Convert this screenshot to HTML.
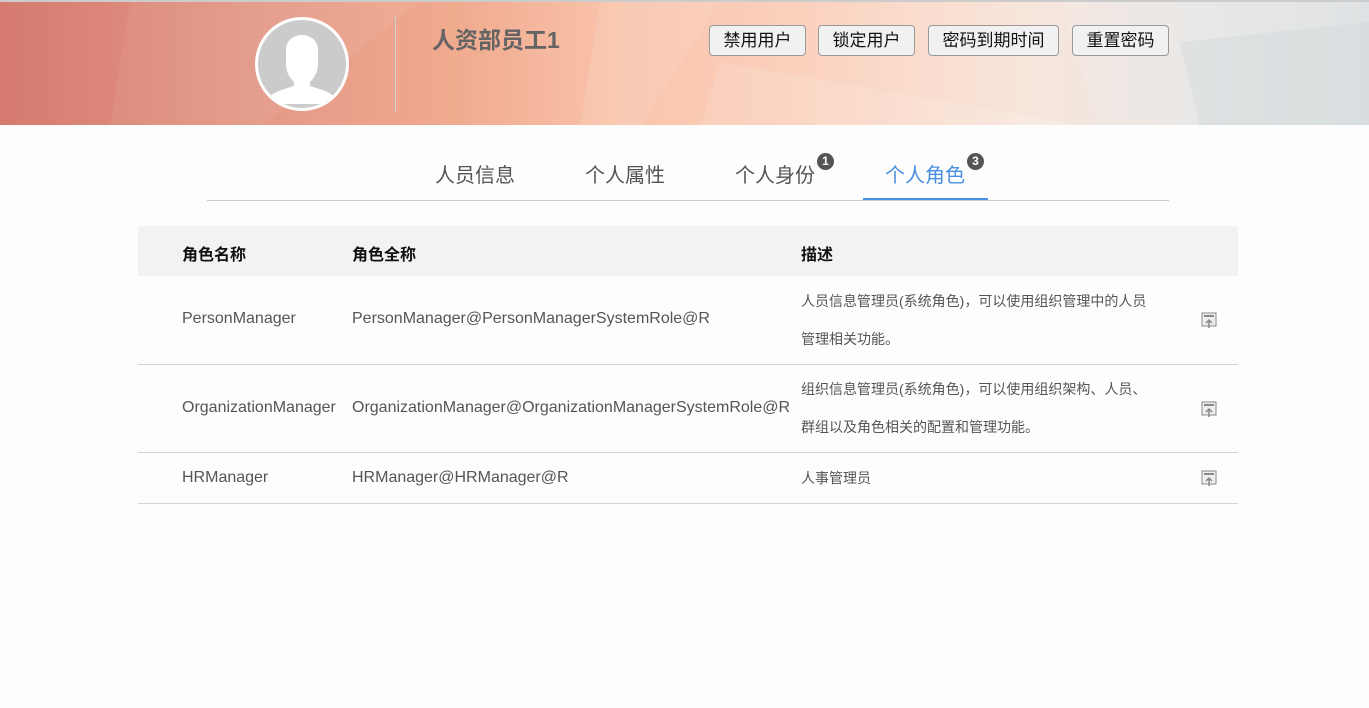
<!DOCTYPE html>
<html><head><meta charset="utf-8"><style>
*{margin:0;padding:0;box-sizing:border-box}
body{width:1369px;height:708px;background:#fdfdfd;font-family:"Liberation Sans","Noto Sans CJK SC",sans-serif;position:relative;overflow:hidden}
.hd{position:absolute;left:0;top:0;width:1369px;height:125px;border-top:2px solid #ccc;
background:linear-gradient(90deg,#d67a70 0%,#e59a88 20%,#f0aa8e 33%,#f9c3aa 45%,#fbd3c0 60%,#f8e6dc 75%,#e6e6e6 88%,#dcdfe1 100%);overflow:hidden}
.poly{position:absolute;inset:0}
.av{position:absolute;left:255px;top:15px;width:94px;height:94px;border-radius:50%;background:#cbcbcb;border:3px solid #fff;overflow:hidden}
.dv{position:absolute;left:395px;top:15px;width:1px;height:95px;background:#c9d3d3}
.nm{position:absolute;left:432px;top:19px;font-size:23px;font-weight:bold;color:#646464}
.b{position:absolute;top:23px;height:31px;border:1px solid #999;border-radius:4px;background:#f1f1f1;font-size:17px;line-height:29px;text-align:center;color:#111}
.tab{position:absolute;top:159px;font-size:20px;color:#555}
.bd{position:absolute;top:153px;width:17px;height:17px;border-radius:50%;background:#555;color:#fff;font-size:12px;line-height:17px;text-align:center;font-weight:bold}
.tbl{position:absolute;left:138px;width:1100px}
.th{top:226px;height:50px;background:#f2f2f2}
.c{position:absolute;font-size:16px;color:#555}
.h{position:absolute;top:241px;font-size:16px;font-weight:bold;color:#111}
.ln{position:absolute;left:138px;width:1100px;height:1px;background:#d4d4d4}
.d{position:absolute;left:801px;font-size:14px;color:#555;line-height:38px;width:372px}
.ic{position:absolute;left:1201px}
</style></head><body>
<div class="hd">
<svg class="poly" width="1369" height="125"><polygon points="130,0 420,0 260,125 110,125" fill="#fff" opacity=".06"/><polygon points="600,0 720,0 640,125 580,125" fill="#fff" opacity=".1"/><polygon points="720,60 1090,125 700,125" fill="#fff" opacity=".12"/><polygon points="1060,0 1369,0 1369,125 1100,125" fill="#fff" opacity=".1"/><polygon points="1180,40 1369,20 1369,125 1200,125" fill="#cfd6da" opacity=".4"/></svg>
<div class="av"><svg width="88" height="88" viewBox="0 0 88 88"><path d="M28 30 C28 10 60 10 60 30 L60 44 C60 54 54 60 52 62 L52 66 C64 70 76 72 82 84 L6 84 C12 72 24 70 36 66 L36 62 C34 60 28 54 28 44 Z" fill="#fff"/></svg></div>
<div class="dv"></div>
<div class="nm">人资部员工1</div>
<div class="b" style="left:709px;width:97px">禁用用户</div>
<div class="b" style="left:818px;width:97px">锁定用户</div>
<div class="b" style="left:928px;width:131px">密码到期时间</div>
<div class="b" style="left:1072px;width:97px">重置密码</div>
</div>
<div class="tab" style="left:435px">人员信息</div>
<div class="tab" style="left:585px">个人属性</div>
<div class="tab" style="left:735px">个人身份</div><div class="bd" style="left:817px">1</div>
<div class="tab" style="left:885px;color:#4a90e2">个人角色</div><div class="bd" style="left:967px">3</div>
<div style="position:absolute;left:207px;top:200px;width:962px;height:1px;background:#ccc"></div>
<div style="position:absolute;left:863px;top:198px;width:125px;height:2px;background:#4a90e2"></div>
<div class="tbl th"></div>
<div class="h" style="left:182px">角色名称</div><div class="h" style="left:352px">角色全称</div><div class="h" style="left:801px">描述</div>
<div class="c" style="left:182px;top:310px">PersonManager</div>
<div class="c" style="left:352px;top:310px">PersonManager@PersonManagerSystemRole@R</div>
<div class="d" style="top:282px">人员信息管理员(系统角色)，可以使用组织管理中的人员<br>管理相关功能。</div>
<div class="ln" style="top:364px"></div>
<div class="c" style="left:182px;top:399px">OrganizationManager</div>
<div class="c" style="left:352px;top:399px">OrganizationManager@OrganizationManagerSystemRole@R</div>
<div class="d" style="top:370px">组织信息管理员(系统角色)，可以使用组织架构、人员、<br>群组以及角色相关的配置和管理功能。</div>
<div class="ln" style="top:452px"></div>
<div class="c" style="left:182px;top:469px">HRManager</div>
<div class="c" style="left:352px;top:469px">HRManager@HRManager@R</div>
<div class="d" style="top:459px">人事管理员</div>
<div class="ln" style="top:503px"></div>
<svg class="ic" style="top:312px" width="16" height="18" viewBox="0 0 16 18"><rect x="1" y="1" width="14" height="13" fill="#eee" stroke="#888"/><rect x="3" y="3" width="10" height="2" fill="#888"/><path d="M8 16V8M5 11l3-3 3 3" stroke="#888" stroke-width="1.5" fill="none"/></svg>
<svg class="ic" style="top:401px" width="16" height="18" viewBox="0 0 16 18"><rect x="1" y="1" width="14" height="13" fill="#eee" stroke="#888"/><rect x="3" y="3" width="10" height="2" fill="#888"/><path d="M8 16V8M5 11l3-3 3 3" stroke="#888" stroke-width="1.5" fill="none"/></svg>
<svg class="ic" style="top:470px" width="16" height="18" viewBox="0 0 16 18"><rect x="1" y="1" width="14" height="13" fill="#eee" stroke="#888"/><rect x="3" y="3" width="10" height="2" fill="#888"/><path d="M8 16V8M5 11l3-3 3 3" stroke="#888" stroke-width="1.5" fill="none"/></svg>
</body></html>
